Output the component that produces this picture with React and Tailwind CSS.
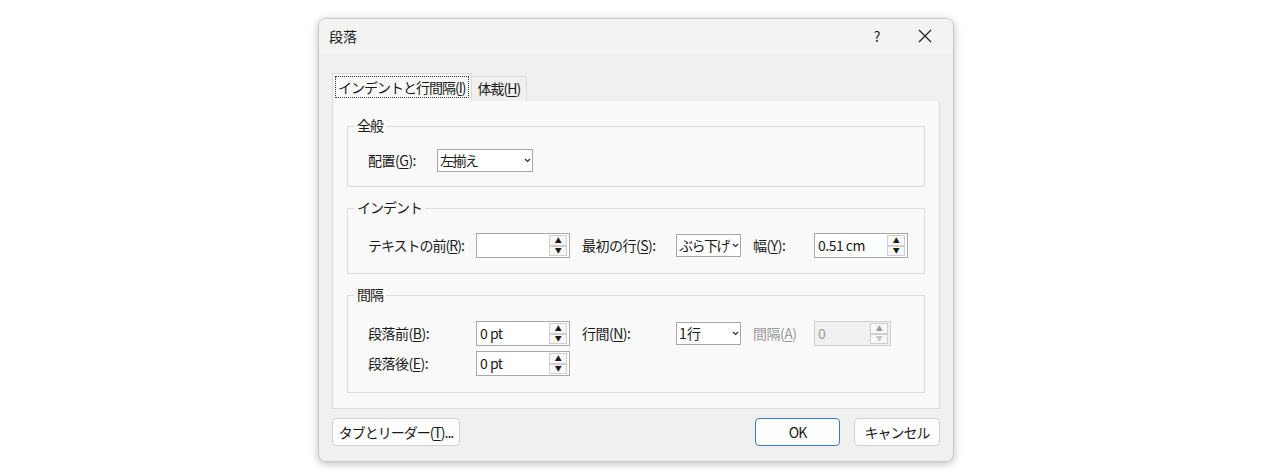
const F = { fontFamily: '"Noto Sans CJK JP", "Noto Sans", sans-serif' };

function U({ c }) { return <span className="underline underline-offset-2">{c}</span>; }

function Spin({ w, value, disabled }) {
  return (
    <div className={`flex h-[25px] ${w} border ${disabled ? 'border-[#cfcfcf] bg-[#f0f0f0] text-[#9a9a9a]' : 'border-[#a8a8a8] bg-white'}`}>
      <div className="flex-1 px-[3px] text-[14px] leading-[23px]">{value}</div>
      <div className="flex flex-col w-[18px] my-[1px] mr-[2px]">
        <div className="flex-1 border border-[#cfcfcf] bg-[#f7f7f7] flex items-center justify-center text-[7px] leading-none">▲</div>
        <div className={`flex-1 border border-[#cfcfcf] bg-[#f7f7f7] flex items-center justify-center text-[7px] leading-none ${disabled ? 'text-[#c8c8c8]' : ''}`}>▼</div>
      </div>
    </div>
  );
}

function Combo({ w, value }) {
  return (
    <div className={`flex h-[23px] ${w} border border-[#a8a8a8] bg-white`}>
      <div className="flex-1 pl-[2px] text-[14px] leading-[21px] whitespace-nowrap overflow-hidden tracking-[-1.5px]">{value}</div>
      <div className="w-[10px] flex items-center justify-center">
        <svg width="7" height="5" viewBox="0 0 7 5"><path d="M1 1l2.5 2.5L6 1" stroke="#333" strokeWidth="1.2" fill="none" /></svg>
      </div>
    </div>
  );
}

function Group({ title, h, children }) {
  return (
    <div className={`relative border border-[#dcdcdc] ${h}`}>
      <div className="absolute -top-[12px] left-[6px] bg-[#f9f9f9] px-[3px] text-[14px] leading-[20px] tracking-[-1px]">{title}</div>
      {children}
    </div>
  );
}

function Btn({ children, w, primary }) {
  return (
    <div className={`h-[28px] ${w} rounded-[4px] border ${primary ? 'border-[#3b7bc6]' : 'border-[#d0d0d0]'} bg-[#fdfdfd] flex items-center justify-center text-[14px] whitespace-nowrap tracking-[-1px]`}>{children}</div>
  );
}

export default function App() {
  return (
    <div style={F} className="w-[1280px] h-[476px] bg-white pt-[18px] text-[#1a1a1a]">
      <div className="ml-[318px] w-[636px] h-[444px] rounded-[8px] border border-[#c8c8c8] bg-[#f0f0f0] shadow-[0_2px_8px_rgba(0,0,0,0.25)] overflow-hidden">
        <div className="h-[34px] bg-[#f3f3f3] flex items-center pl-[10px] text-[14px]">
          <span className="flex-1">段落</span>
          <span className="w-[40px] text-center">?</span>
          <span className="w-[56px] flex justify-center">
            <svg width="14" height="14" viewBox="0 0 14 14"><path d="M1 1l12 12M13 1L1 13" stroke="#222" strokeWidth="1.3" /></svg>
          </span>
        </div>
        <div className="h-[20px] bg-[#f0f0f0]" />
        <div className="flex ml-[13px] h-[28px] items-end whitespace-nowrap tracking-[-1px]">
          <div className="h-[28px] bg-[#f9f9f9] border-t border-x border-[#dcdcdc] px-[2px] pt-[2px]">
            <div className="border border-dotted border-[#333] px-[2px] text-[14px] leading-[20px]">インデントと行間隔(<U c="I" />)</div>
          </div>
          <div className="h-[25px] border-t border-r border-[#dcdcdc] bg-[#f0f0f0] px-[6px] text-[14px] leading-[22px]">体裁(<U c="H" />)</div>
        </div>
        <div className="mx-[13px] h-[308px] bg-[#f9f9f9] border border-[#dcdcdc] border-t-0 px-[14px] pt-[25px] flex flex-col gap-[21px] whitespace-nowrap">
          <Group title="全般" h="h-[61px]">
            <div className="flex items-center pl-[20px] pt-[22px] text-[14px] tracking-[-0.5px]">
              <span className="w-[69px]">配置(<U c="G" />):</span>
              <Combo w="w-[96px]" value="左揃え" />
            </div>
          </Group>
          <Group title="インデント" h="h-[66px]">
            <div className="flex items-center pl-[20px] pt-[24px] text-[14px] tracking-[-0.5px]">
              <span className="w-[108px] tracking-[-1px]">テキストの前(<U c="R" />):</span>
              <Spin w="w-[94px]" value="" />
              <span className="w-[94px] ml-[12px]">最初の行(<U c="S" />):</span>
              <Combo w="w-[65px]" value="ぶら下げ" />
              <span className="w-[61px] ml-[12px]">幅(<U c="Y" />):</span>
              <Spin w="w-[94px]" value="0.51 cm" />
            </div>
          </Group>
          <Group title="間隔" h="h-[98px]">
            <div className="pl-[20px] pt-[25px] text-[14px] flex flex-col gap-[5px] tracking-[-0.5px]">
              <div className="flex items-center">
                <span className="w-[108px]">段落前(<U c="B" />):</span>
                <Spin w="w-[94px]" value="0 pt" />
                <span className="w-[94px] ml-[12px]">行間(<U c="N" />):</span>
                <Combo w="w-[65px]" value="1 行" />
                <span className="w-[61px] ml-[12px] text-[#9a9a9a]">間隔(<U c="A" />)</span>
                <Spin w="w-[77px]" value="0" disabled />
              </div>
              <div className="flex items-center">
                <span className="w-[108px]">段落後(<U c="E" />):</span>
                <Spin w="w-[94px]" value="0 pt" />
              </div>
            </div>
          </Group>
        </div>
        <div className="flex items-center px-[13px] mt-[9px]">
          <Btn w="w-[128px]">タブとリーダー(<U c="T" />)...</Btn>
          <div className="flex-1" />
          <Btn w="w-[85px]" primary>OK</Btn>
          <div className="w-[14px]" />
          <Btn w="w-[86px]">キャンセル</Btn>
        </div>
      </div>
    </div>
  );
}
